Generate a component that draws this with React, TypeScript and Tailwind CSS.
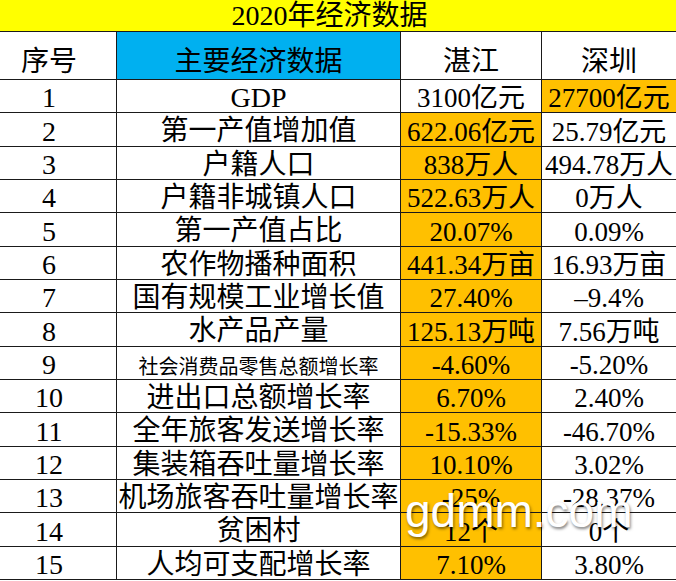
import React from "react";

type Row = {
  n: string;
  name: string;
  a: string;
  b: string;
  h: string;
  aOrange: boolean;
  bOrange: boolean;
  small?: boolean;
};

const rows: Row[] = [
  { n: "1", name: "GDP", a: "3100亿元", b: "27700亿元", h: "h-[33px]", aOrange: false, bOrange: true },
  { n: "2", name: "第一产值增加值", a: "622.06亿元", b: "25.79亿元", h: "h-[34px]", aOrange: true, bOrange: false },
  { n: "3", name: "户籍人口", a: "838万人", b: "494.78万人", h: "h-[33px]", aOrange: true, bOrange: false },
  { n: "4", name: "户籍非城镇人口", a: "522.63万人", b: "0万人", h: "h-[33px]", aOrange: true, bOrange: false },
  { n: "5", name: "第一产值占比", a: "20.07%", b: "0.09%", h: "h-[34px]", aOrange: true, bOrange: false },
  { n: "6", name: "农作物播种面积", a: "441.34万亩", b: "16.93万亩", h: "h-[33px]", aOrange: true, bOrange: false },
  { n: "7", name: "国有规模工业增长值", a: "27.40%", b: "–9.4%", h: "h-[33px]", aOrange: true, bOrange: false },
  { n: "8", name: "水产品产量", a: "125.13万吨", b: "7.56万吨", h: "h-[34px]", aOrange: true, bOrange: false },
  { n: "9", name: "社会消费品零售总额增长率", a: "-4.60%", b: "-5.20%", h: "h-[33px]", aOrange: true, bOrange: false, small: true },
  { n: "10", name: "进出口总额增长率", a: "6.70%", b: "2.40%", h: "h-[33px]", aOrange: true, bOrange: false },
  { n: "11", name: "全年旅客发送增长率", a: "-15.33%", b: "-46.70%", h: "h-[34px]", aOrange: true, bOrange: false },
  { n: "12", name: "集装箱吞吐量增长率", a: "10.10%", b: "3.02%", h: "h-[33px]", aOrange: true, bOrange: false },
  { n: "13", name: "机场旅客吞吐量增长率", a: "-25%", b: "-28.37%", h: "h-[33px]", aOrange: true, bOrange: false },
  { n: "14", name: "贫困村", a: "12个", b: "0个", h: "h-[34px]", aOrange: true, bOrange: false },
  { n: "15", name: "人均可支配增长率", a: "7.10%", b: "3.80%", h: "h-[33px]", aOrange: true, bOrange: false },
];

const font = "[font-family:'Liberation_Serif','Noto_Sans_CJK_SC',serif]";

export default function App() {
  return (
    <div className={`relative w-[676px] h-[581px] overflow-hidden bg-white text-black ${font}`}>
      <div className="h-[32px] bg-[#ffff00] border-b border-[#1a1a1a] flex items-center justify-center pr-[17px] text-[28px] leading-none">
        2020年经济数据
      </div>
      <div className="grid grid-cols-[117px_284px_141px_134px]">
        <div className="h-[48px] border-b border-r border-[#1a1a1a] flex items-center justify-center pr-[18px] pt-[12px] text-[28px] leading-none">序号</div>
        <div className="h-[48px] border-b border-r border-[#1a1a1a] bg-[#00b0f0] flex items-center justify-center pt-[12px] text-[28px] leading-none">主要经济数据</div>
        <div className="h-[48px] border-b border-r border-[#1a1a1a] flex items-center justify-center pt-[12px] text-[28px] leading-none">湛江</div>
        <div className="h-[48px] border-b border-[#1a1a1a] flex items-center justify-center pt-[12px] text-[28px] leading-none">深圳</div>
        {rows.map((r) => (
          <React.Fragment key={r.n}>
            <div className={`${r.h} border-b border-r border-[#1a1a1a] flex items-center justify-center pr-[18px] pt-[4px] text-[28px] leading-none`}>{r.n}</div>
            <div className={`${r.h} border-b border-r border-[#1a1a1a] flex items-center justify-center leading-none whitespace-nowrap ${r.small ? "text-[20px] pt-[7px]" : "text-[28px] pt-[3px]"}`}>{r.name}</div>
            <div className={`${r.h} border-b border-r border-[#1a1a1a] flex items-center justify-center pt-[5px] text-[27px] leading-none whitespace-nowrap ${r.aOrange ? "bg-[#ffc000]" : "bg-white"}`}>{r.a}</div>
            <div className={`${r.h} border-b border-[#1a1a1a] flex items-center justify-center pt-[5px] text-[27px] leading-none whitespace-nowrap ${r.bOrange ? "bg-[#ffc000]" : "bg-white"}`}>{r.b}</div>
          </React.Fragment>
        ))}
      </div>
      <div className="absolute left-[405px] top-[488px] text-[46px] leading-none text-white [font-family:'Liberation_Sans',Arial,sans-serif] [text-shadow:1px_2px_3px_rgba(0,0,0,0.5)] select-none">
        gdmm.com
      </div>
    </div>
  );
}
